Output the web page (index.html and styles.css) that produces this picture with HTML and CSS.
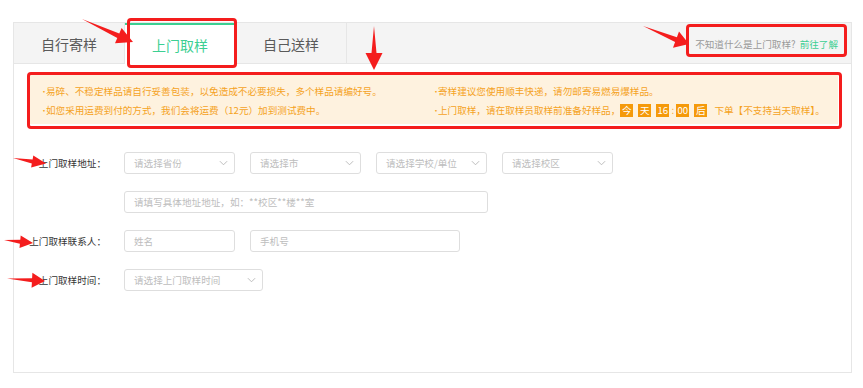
FILE: index.html
```html
<!DOCTYPE html>
<html lang="zh-CN">
<head>
<meta charset="utf-8">
<title>上门取样</title>
<link rel="stylesheet" href="styles.css">
</head>
<body>
<div class="page">
  <div class="panel">
    <div class="tabbar">
      <div class="tabs">
        <div class="tab">自行寄样</div>
        <div class="tab active">上门取样</div>
        <div class="tab">自己送样</div>
      </div>
      <div class="help">不知道什么是上门取样?<a class="help-link">前往了解</a></div>
    </div>
    <div class="notice">
      <div class="notice-item">易碎、不稳定样品请自行妥善包装，以免造成不必要损失，多个样品请编好号。</div>
      <div class="notice-item">寄样建议您使用顺丰快递，请勿邮寄易燃易爆样品。</div>
      <div class="notice-item">如您采用运费到付的方式，我们会将运费（12元）加到测试费中。</div>
      <div class="notice-item">上门取样，请在取样员取样前准备好样品，<span class="badge">今</span><span class="badge">天</span><span class="badge">16</span><span class="colon">:</span><span class="badge">00</span><span class="badge">后</span> 下单【不支持当天取样】。</div>
    </div>
    <div class="form">
      <div class="row">
        <div class="label">上门取样地址：</div>
        <div class="fields">
          <div class="select w111"><span class="ph">请选择省份</span><svg class="chev" viewBox="0 0 10 6"><path d="M1 1l4 4 4-4"/></svg></div>
          <div class="select w111"><span class="ph">请选择市</span><svg class="chev" viewBox="0 0 10 6"><path d="M1 1l4 4 4-4"/></svg></div>
          <div class="select w111"><span class="ph">请选择学校/单位</span><svg class="chev" viewBox="0 0 10 6"><path d="M1 1l4 4 4-4"/></svg></div>
          <div class="select w111"><span class="ph">请选择校区</span><svg class="chev" viewBox="0 0 10 6"><path d="M1 1l4 4 4-4"/></svg></div>
        </div>
      </div>
      <div class="row">
        <div class="label"></div>
        <div class="fields">
          <div class="input w363"><span class="ph">请填写具体地址地址，如：**校区**楼**室</span></div>
        </div>
      </div>
      <div class="row">
        <div class="label">上门取样联系人：</div>
        <div class="fields">
          <div class="input w111"><span class="ph">姓名</span></div>
          <div class="input w210"><span class="ph">手机号</span></div>
        </div>
      </div>
      <div class="row">
        <div class="label">上门取样时间：</div>
        <div class="fields">
          <div class="select w139"><span class="ph">请选择上门取样时间</span><svg class="chev" viewBox="0 0 10 6"><path d="M1 1l4 4 4-4"/></svg></div>
        </div>
      </div>
    </div>
  </div>
</div>

<div class="marks">
  <div class="mark-box box-tab"></div>
  <div class="mark-box box-notice"></div>
  <div class="mark-box box-help"></div>
  <svg class="arrows" width="863" height="388" viewBox="0 0 863 388">
    <polygon points="82,19 119.3,33.4 121.6,28.1 133,42 115,43.3 117.3,38"/>
    <polygon points="374,26 376.5,53 382.5,53 374,70 365.5,53 371.5,53"/>
    <polygon points="643,26 676.9,37.3 679,31.5 689,44 673,47.8 675.1,41.9"/>
    <polygon points="13,158 32.6,159.5 33.3,155.4 46,163.5 31.1,167.6 31.8,163.5"/>
    <polygon points="4,240 20.3,239.7 20.7,235.5 33,243 19.5,248 19.9,243.7"/>
    <polygon points="7,278.5 32.1,278.3 32.4,272.8 45,281 31.6,287.8 31.9,282.3"/>
  </svg>
</div>
</body>
</html>
```

FILE: styles.css
```css
* { box-sizing: border-box; }

html, body {
  margin: 0;
  padding: 0;
  background: #ffffff;
}

body {
  position: relative;
  width: 863px;
  height: 388px;
  overflow: hidden;
  font-family: "Noto Sans CJK SC", "Noto Sans", sans-serif;
}

.page {
  padding: 22px 11px 0 13px;
}

.panel {
  width: 839px;
  height: 351px;
  border: 1px solid #e6e6e6;
  background: #ffffff;
}

.tabbar {
  display: flex;
  justify-content: space-between;
  align-items: stretch;
  height: 41px;
  background: #f4f4f4;
  border-bottom: 1px solid #e6e6e6;
}

.tabs {
  display: flex;
}

.tab {
  width: 111px;
  display: flex;
  align-items: center;
  justify-content: center;
  font-size: 14px;
  line-height: 20px;
  color: #5a5a5a;
  border-right: 1px solid #e6e6e6;
  padding-top: 1px;
}

.tab.active {
  background: #ffffff;
  color: #3ccf92;
  border-top: 2px solid #3ccf92;
  padding-top: 0;
  margin-bottom: -1px;
}

.help {
  display: flex;
  align-items: center;
  padding: 2px 13px 0 0;
  font-size: 9.6px;
  color: #999999;
}

.help-link {
  color: #3ccf92;
  margin-left: 4px;
}

.notice {
  margin: 10px 13px 0 15px;
  padding: 8px 0 4px 11px;
  background: #fef2df;
  display: grid;
  grid-template-columns: 392px 1fr;
  font-size: 9.6px;
  line-height: 19px;
  color: #f5a21e;
}

.notice-item {
  white-space: nowrap;
}

.notice-item::before {
  content: "•";
  display: inline-block;
  width: 6px;
  font-size: 8px;
}

.badge {
  display: inline-block;
  min-width: 13px;
  height: 13px;
  line-height: 13px;
  padding: 0 1px;
  margin-right: 5px;
  background: #f59a0a;
  color: #ffffff;
  text-align: center;
  font-size: 9.6px;
}

.colon {
  display: inline-block;
  width: 7px;
  margin-left: -5px;
  text-align: center;
  color: #f5a21e;
}

.form {
  margin-top: 28px;
  display: flex;
  flex-direction: column;
  gap: 17px;
}

.row {
  display: flex;
  align-items: center;
  height: 22px;
}

.label {
  flex: none;
  width: 92px;
  text-align: right;
  font-size: 9.6px;
  color: #333333;
  line-height: 22px;
  white-space: nowrap;
}

.fields {
  flex: none;
  margin-left: 18px;
  display: flex;
  gap: 15px;
}

.select, .input {
  flex: none;
  display: flex;
  align-items: center;
  height: 22px;
  border: 1px solid #dedede;
  border-radius: 3px;
  background: #ffffff;
  font-size: 9.6px;
  color: #333333;
}

.select {
  justify-content: space-between;
  padding: 0 6px 0 9px;
}

.input {
  padding: 0 9px;
}

.ph {
  color: #bdbdbd;
  white-space: nowrap;
}

.chev {
  width: 9px;
  height: 6px;
  fill: none;
  stroke: #b5b5b5;
  stroke-width: 1;
}

.w111 { width: 111px; }
.w139 { width: 139px; }
.w210 { width: 210px; }
.w363 { width: 364px; }

.marks {
  position: absolute;
  left: 0;
  top: 0;
  width: 863px;
  height: 388px;
  pointer-events: none;
}

.mark-box {
  position: absolute;
  border: 3px solid #f41d1d;
  border-radius: 4px;
}

.box-tab { left: 127px; top: 18px; width: 110px; height: 50px; }
.box-notice { left: 27px; top: 72px; width: 815px; height: 57px; }
.box-help { left: 686px; top: 24px; width: 161px; height: 33px; }

.arrows {
  position: absolute;
  left: 0;
  top: 0;
}

.arrows polygon {
  fill: #f41d1d;
}
```
